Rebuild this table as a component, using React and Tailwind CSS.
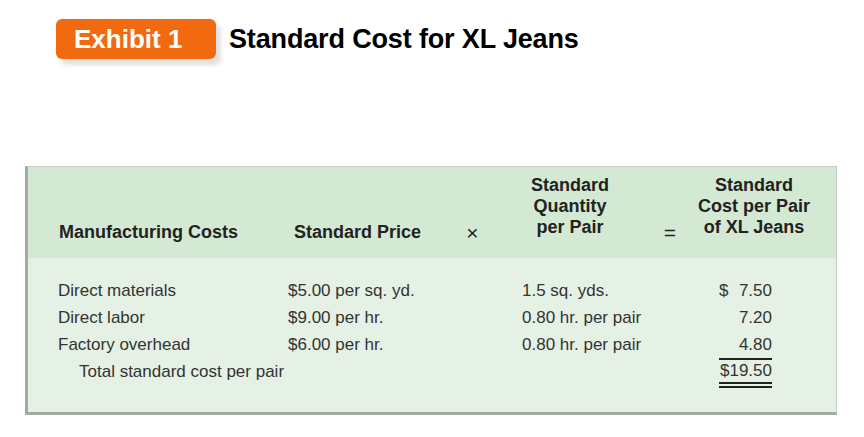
import React from 'react';

const rows = [
  { name: 'Direct materials', price: '$5.00 per sq. yd.', qty: '1.5 sq. yds.', cost: '7.50', dollar: true },
  { name: 'Direct labor', price: '$9.00 per hr.', qty: '0.80 hr. per pair', cost: '7.20' },
  { name: 'Factory overhead', price: '$6.00 per hr.', qty: '0.80 hr. per pair', cost: '4.80' },
];

const cols = 'grid grid-cols-[260px_172px_25px_170px_30px_138px]';

const App = () => {
  return (
    <div className="w-[864px] h-[437px] bg-white font-['Liberation_Sans',Arial,sans-serif] overflow-hidden">
      {/* Title */}
      <div className="flex items-center pt-[19px] pl-[56px]">
        <div className="w-[160px] h-[40px] rounded-[6px] bg-[#f26a10] shadow-[5px_6px_4px_rgba(0,0,0,0.12)] flex items-center pl-[18px]">
          <span className="text-white font-bold text-[26px] leading-none">Exhibit 1</span>
        </div>
        <h1 className="ml-[13px] text-black font-bold text-[27px] leading-none tracking-[-0.15px]">Standard Cost for XL Jeans</h1>
      </div>

      {/* Table */}
      <div className="mt-[107px] ml-[25px] w-[812px] border-l-[3px] border-b-[3px] border-t border-r border-l-[#a6aaa6] border-b-[#a6aaa6] border-t-[#c9ccc9] border-r-[#c9ccc9]">
        <div className={`${cols} h-[91px] bg-[#d4e9d3] text-[#222] font-bold text-[18px] leading-[21px] items-end`}>
          <div className="pl-[31px] pb-[15px]">Manufacturing Costs</div>
          <div className="pl-[6px] pb-[15px]">Standard Price</div>
          <div className="pb-[15px] text-center font-normal text-[21px]">×</div>
          <div className="pb-[20px] text-center">Standard<br />Quantity<br />per Pair</div>
          <div className="pb-[15px] text-center font-normal text-[21px]">=</div>
          <div className="pb-[20px] text-center">Standard<br />Cost per Pair<br />of XL Jeans</div>
        </div>
        <div className="h-[154px] bg-[#e5f1e4] pt-[19px] text-[#333] text-[17px] leading-[27px]">
          {rows.map((r) => (
            <div key={r.name} className={cols}>
              <div className="pl-[30px]">{r.name}</div>
              <div>{r.price}</div>
              <div />
              <div className="pl-[37px]">{r.qty}</div>
              <div />
              <div className="pr-[51px] flex justify-end">
                {r.dollar ? (
                  <span className="flex w-[53px] justify-between">
                    <span>$</span>
                    <span>{r.cost}</span>
                  </span>
                ) : (
                  <span>{r.cost}</span>
                )}
              </div>
            </div>
          ))}
          <div className={cols}>
            <div className="pl-[51px] col-span-4">Total standard cost per pair</div>
            <div />
            <div className="pr-[51px] flex justify-end">
              <span className="inline-block w-[53px] text-right leading-[22px] border-t-2 border-b-[6px] border-double border-t-[#222] border-b-[#222]">
                $19.50
              </span>
            </div>
          </div>
        </div>
      </div>
    </div>
  );
};

export default App;
